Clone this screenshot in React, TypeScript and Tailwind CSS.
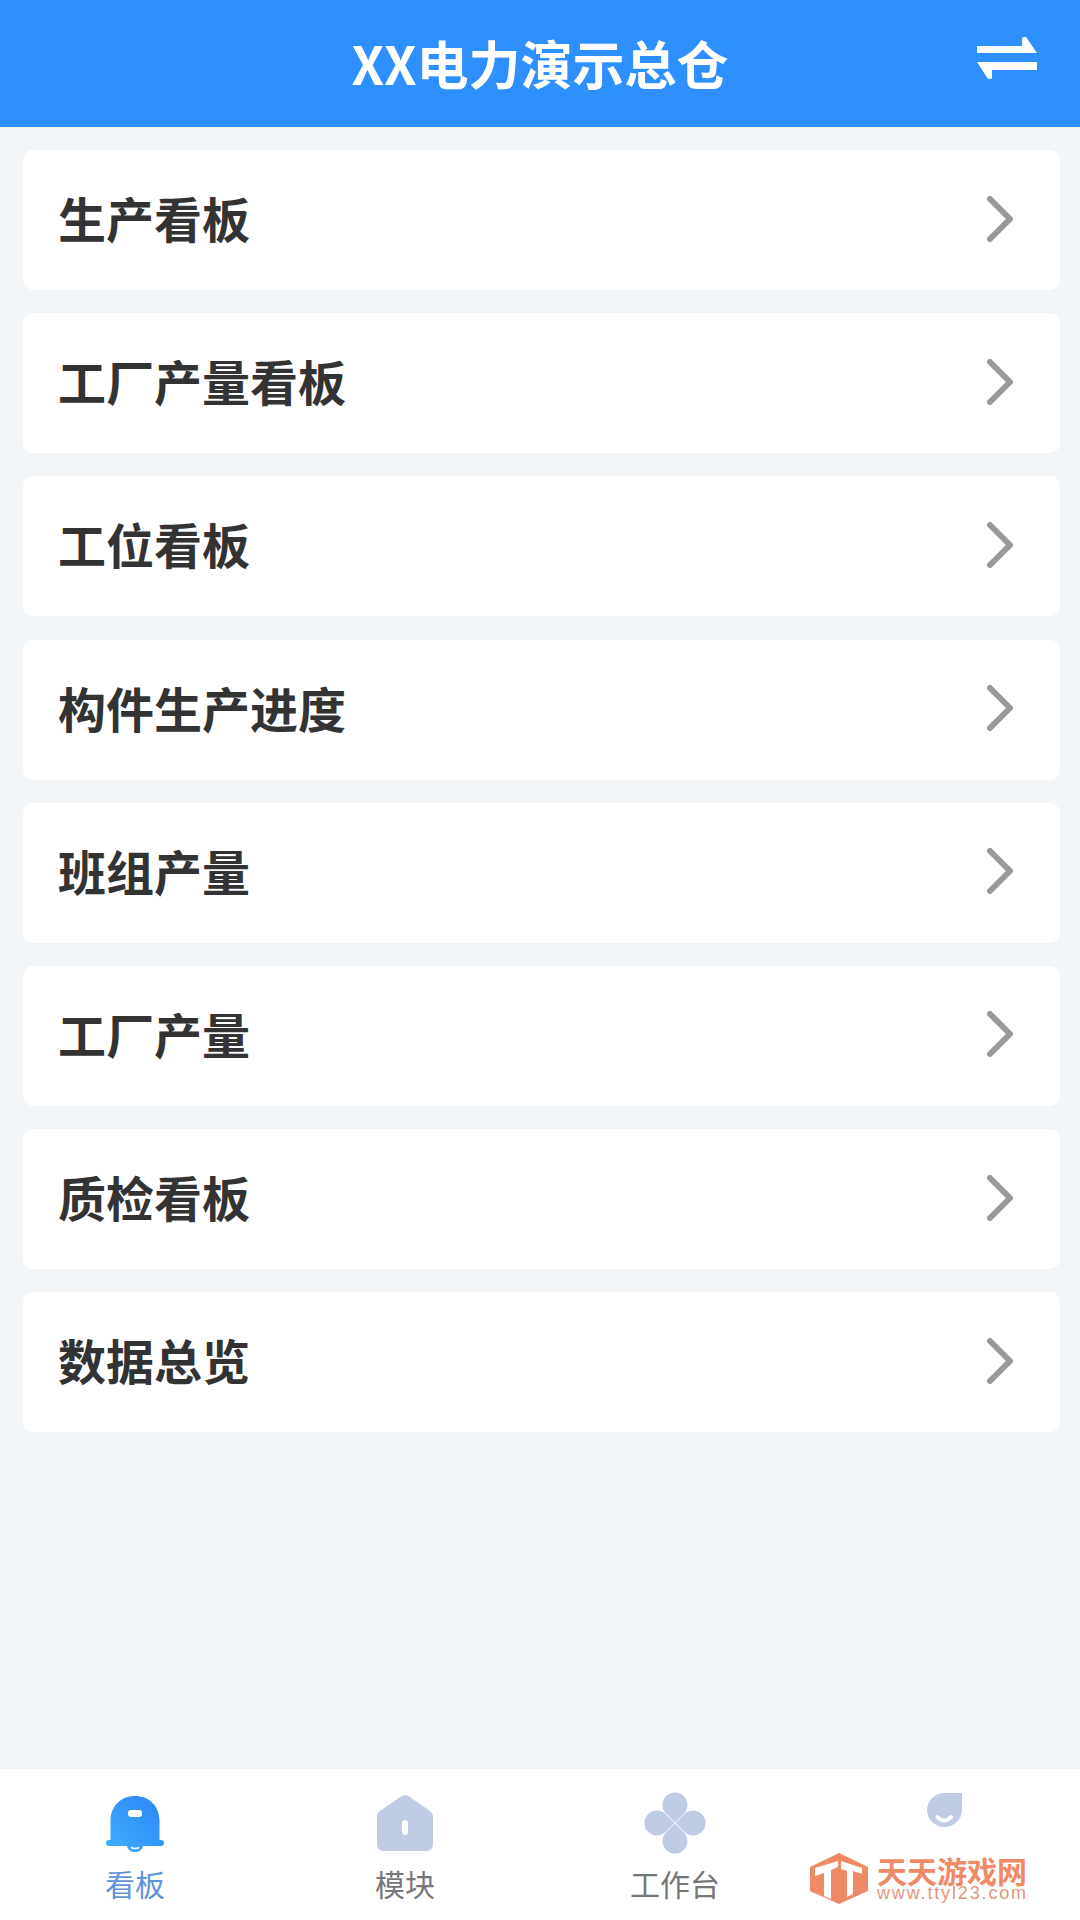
const menuItems = ['生产看板', '工厂产量看板', '工位看板', '构件生产进度', '班组产量', '工厂产量', '质检看板', '数据总览'];

const cjk = "font-['Noto_Sans_CJK_SC','Noto_Sans',sans-serif]";

function SwapIcon() {
  return (
    <svg width="60" height="42" viewBox="0 0 60 42" fill="white">
      <path d="M0 9H45V1.5Q45 0 47 0H49L60 16H0Z" />
      <path d="M60 25V33H15V40.5Q15 42 13 42H11L0 25Z" />
    </svg>
  );
}

function Chevron() {
  return (
    <svg width="26" height="46" viewBox="0 0 26 46" fill="none" stroke="#999999" strokeWidth="6" strokeLinecap="round" strokeLinejoin="round">
      <path d="M3 3L23 23L3 43" />
    </svg>
  );
}

function BellIcon() {
  return (
    <svg width="58" height="57" viewBox="0 0 58 57">
      <defs>
        <linearGradient id="bellFill" x1="0" y1="1" x2="1" y2="0">
          <stop offset="0" stopColor="#3fb0ff" />
          <stop offset="1" stopColor="#2a84f4" />
        </linearGradient>
      </defs>
      <path d="M4.5 45V26C4.5 11 15 1 29 1S53.5 11 53.5 26V45H55A3 3 0 0 1 55 51H37C36 55 33 57 29 57S22 55 21 51H3A3 3 0 0 1 3 45Z" fill="url(#bellFill)" />
      <rect x="22" y="15" width="14" height="7" rx="3" fill="white" />
      <path d="M25 52.5Q29 54.5 33 52.5" stroke="white" strokeWidth="1.5" fill="none" />
    </svg>
  );
}

function HomeIcon() {
  return (
    <svg width="56" height="56" viewBox="0 0 56 56">
      <path d="M24 1.5Q28 -1 32 1.5L53 16Q56 18 56 22V49Q56 56 49 56H7Q0 56 0 49V22Q0 18 3 16Z" fill="#c0cbe4" />
      <rect x="25" y="25" width="6" height="15" rx="3" fill="white" />
    </svg>
  );
}

function CloverIcon() {
  return (
    <svg width="62" height="62" viewBox="0 0 62 62" fill="#c0cbe4">
      <path d="M31 30.5L22.2 21.8A12.5 12.5 0 1 1 39.8 21.8Z" />
      <path d="M31 30.5L22.2 21.8A12.5 12.5 0 1 1 39.8 21.8Z" transform="rotate(90 31 31)" />
      <path d="M31 30.5L22.2 21.8A12.5 12.5 0 1 1 39.8 21.8Z" transform="rotate(180 31 31)" />
      <path d="M31 30.5L22.2 21.8A12.5 12.5 0 1 1 39.8 21.8Z" transform="rotate(270 31 31)" />
    </svg>
  );
}

function DropIcon() {
  return (
    <svg width="35" height="34" viewBox="0 0 35 34">
      <path d="M17.5 0H35V17A17.5 17 0 1 1 17.5 0Z" fill="#c0cbe4" />
      <path d="M10.5 24Q17 31 24 24" stroke="white" strokeWidth="4" strokeLinecap="round" fill="none" />
    </svg>
  );
}

function WatermarkLogo() {
  return (
    <svg width="58" height="51" viewBox="0 0 58 51">
      <path d="M29 0L58 14V38L29 51L0 38V14Z" fill="#ef8a66" />
      <path d="M5 15L28 8V14L21 17V46L14 43V20L5 23Z" fill="white" />
      <path d="M31 8L52 15V21L43 18V41L37 44V18L31 16Z" fill="white" />
    </svg>
  );
}

function TabItem({ label, active, children }: { label: string; active?: boolean; children: React.ReactNode }) {
  return (
    <div className="flex flex-col items-center">
      <div className="h-[62px] flex items-center justify-center">{children}</div>
      <span className={`mt-[12px] text-[30px] leading-[34px] ${active ? 'text-[#5f93dc]' : 'text-[#777777]'}`}>{label}</span>
    </div>
  );
}

export default function App() {
  return (
    <div className={`relative w-[1080px] h-[1920px] flex flex-col bg-[#f3f6f8] overflow-hidden ${cjk}`}>
      {/* Header */}
      <header className="h-[127px] shrink-0 bg-[#2e8fff] flex items-center justify-center relative">
        <h1 className="text-[52px] leading-[60px] font-bold text-white -mt-[2px]">XX电力演示总仓</h1>
        <div className="absolute right-[43px] top-[37px]">
          <SwapIcon />
        </div>
      </header>

      {/* Menu list */}
      <main className="flex-1 flex flex-col gap-[23.2px] pt-[23px] pl-[23px] pr-[20px]">
        {menuItems.map((item) => (
          <div key={item} className="h-[140px] bg-white rounded-[10px] flex items-center justify-between pl-[35px] pr-[47px]">
            <span className="text-[48px] leading-[56px] font-bold text-[#333333] -mt-[6px]">{item}</span>
            <div className="-mt-[3px]">
              <Chevron />
            </div>
          </div>
        ))}
      </main>

      {/* Tab bar */}
      <footer className="h-[151px] shrink-0 bg-white grid grid-cols-4 pt-[23px]">
        <TabItem label="看板" active>
          <BellIcon />
        </TabItem>
        <TabItem label="模块">
          <HomeIcon />
        </TabItem>
        <TabItem label="工作台">
          <CloverIcon />
        </TabItem>
        <div className="flex flex-col items-center">
          <div className="-ml-[2px] mt-[1px]">
            <DropIcon />
          </div>
        </div>
      </footer>

      {/* Watermark */}
      <div className="absolute left-[810px] top-[1853px] flex gap-[9px]">
        <WatermarkLogo />
        <div className="flex flex-col pt-[2px]">
          <span className="text-[30px] leading-[30px] font-bold text-[#ef8a66]">天天游戏网</span>
          <span className="mt-[1px] text-[18px] leading-[15px] text-[#e0967c] font-['Liberation_Sans',sans-serif] tracking-[1.85px]">www.ttyl23.com</span>
        </div>
      </div>
    </div>
  );
}
